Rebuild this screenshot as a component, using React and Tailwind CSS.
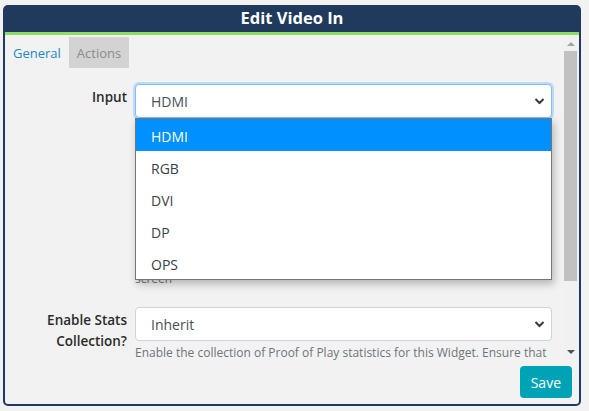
import { useState } from "react";

const options = ["HDMI", "RGB", "DVI", "DP", "OPS"];

const Chevron = () => (
  <svg width="11" height="7" viewBox="0 0 11 7" className="absolute right-[6px] top-1/2 -translate-y-1/2">
    <path d="M1.5 1.5 L5.5 5.5 L9.5 1.5" fill="none" stroke="#343a40" strokeWidth="2" />
  </svg>
);

const Scrollbar = () => (
  <div className="w-[13px] mt-[1px] mb-[1px] mr-[2px] bg-[#f1f1f1] flex flex-col items-center">
    <div className="h-[15px] w-full flex items-center justify-center">
      <div className="w-0 h-0 border-l-[4px] border-r-[4px] border-b-[4px] border-l-transparent border-r-transparent border-b-[#a3a3a3]" />
    </div>
    <div className="w-full h-[230px] bg-[#c1c1c1]" />
    <div className="flex-1" />
    <div className="h-[15px] w-full flex items-center justify-center">
      <div className="w-0 h-0 border-l-[4px] border-r-[4px] border-t-[4px] border-l-transparent border-r-transparent border-t-[#505050]" />
    </div>
  </div>
);

const App = () => {
  const [selected] = useState("HDMI");

  return (
    <div className="w-[589px] h-[411px] bg-[#f2f2f2] pt-[5px] pl-[3px] font-['Open_Sans',sans-serif]">
      <div className="w-[578px] h-[401px] bg-[#1f3a5c] rounded-[5px] p-[2px] pt-0 flex flex-col overflow-hidden">
        <div className="h-[27px] flex items-center justify-center text-white font-bold text-[16.5px] leading-none">
          Edit Video In
        </div>
        <div className="h-[3px] bg-[#8fdc62]" />
        <div className="flex-1 bg-[#f2f2f2] rounded-b-[3px] flex flex-col">
          <div className="h-[325px] flex">
            <div className="flex-1 min-w-0 overflow-hidden">
              <div className="flex text-[13px] leading-none mt-[2px]">
                <div className="h-[31px] px-[8px] pt-[2px] flex items-center text-[#1e88c6]">General</div>
                <div className="h-[31px] px-[8px] pt-[2px] flex items-center bg-[#d3d3d3] text-[#8a8a8a]">Actions</div>
              </div>

              <div className="pt-[16px] pr-[12px]">
                <div className="flex">
                  <div className="w-[122px] shrink-0 text-right font-semibold text-[13.5px] text-[#2b2b2b] leading-[21px] pt-[3px]">
                    Input
                  </div>
                  <div className="ml-[8px] flex-1 min-w-0 relative">
                    <div className="relative h-[34px] bg-white border border-[#80bdff] rounded-[4px] shadow-[0_0_0_2px_rgba(0,123,255,0.2)] flex items-center pl-[15px] text-[14px] text-[#495057]">
                      {selected}
                      <Chevron />
                    </div>
                    <div className="mt-[3px] text-[12px] leading-[21px] text-[#6c757d] whitespace-nowrap">
                      <div>Select the input source the display should switch to when this Widget</div>
                      <div>is shown. The options available depend on the display model and the</div>
                      <div>connected hardware. Please make sure the input selected is physically</div>
                      <div>connected before scheduling this Widget, otherwise the display will</div>
                      <div>show a blank image or a "No Signal" message while the Widget is</div>
                      <div>running. Once the duration has expired the display will return to the</div>
                      <div>previous input and continue playing the Layout that is currently on</div>
                      <div>screen</div>
                    </div>
                    <div className="absolute left-0 top-[34px] w-full bg-white border border-[#767676] shadow-[2px_4px_8px_rgba(0,0,0,0.25)] text-[14px]">
                      {options.map((o) => (
                        <div
                          key={o}
                          className={`h-[32px] flex items-center pl-[15px] pt-[2px] ${
                            o === selected ? "bg-[#0090ff] text-white" : "text-[#3a3f4a]"
                          }`}
                        >
                          {o}
                        </div>
                      ))}
                    </div>
                  </div>
                </div>

                <div className="flex mt-[18px]">
                  <div className="w-[122px] shrink-0 text-right font-semibold text-[13.5px] text-[#2b2b2b] leading-[21px] pt-[3px]">
                    Enable Stats
                    <br />
                    Collection?
                  </div>
                  <div className="ml-[8px] flex-1 min-w-0">
                    <div className="relative h-[34px] bg-white border border-[#ced4da] rounded-[4px] flex items-center pl-[15px] text-[14px] text-[#495057]">
                      Inherit
                      <Chevron />
                    </div>
                    <div className="mt-[1px] text-[12px] leading-[21px] text-[#6c757d] whitespace-nowrap">
                      Enable the collection of Proof of Play statistics for this Widget. Ensure that
                    </div>
                  </div>
                </div>
              </div>
            </div>
            <Scrollbar />
          </div>
          <div className="flex-1 flex justify-end items-start pt-[6px] pr-[7px]">
            <button className="h-[32px] px-[11px] rounded-[4px] bg-[#00a3b5] text-white text-[14px]">
              Save
            </button>
          </div>
        </div>
      </div>
    </div>
  );
};

export default App;
